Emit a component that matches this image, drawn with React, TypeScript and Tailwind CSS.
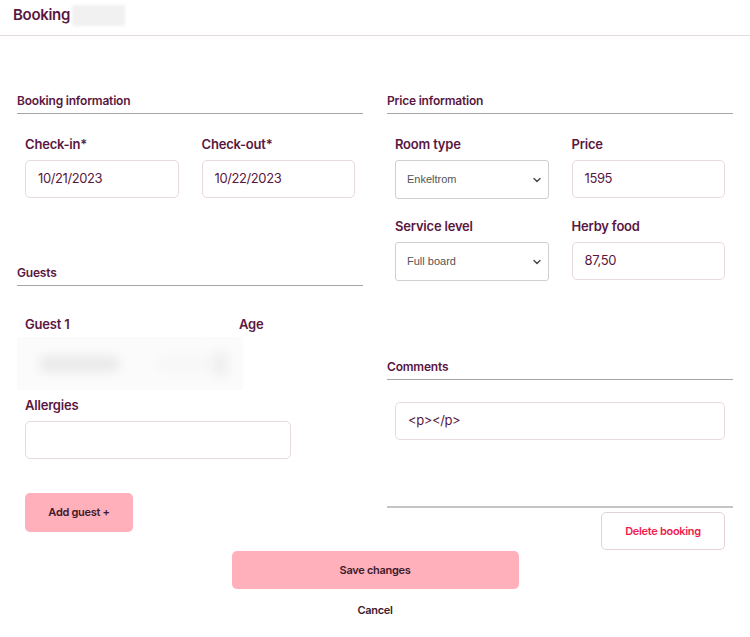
import React from "react";

function Label({ children }: { children: React.ReactNode }) {
  return (
    <div className="text-[13px] leading-[20px] font-semibold tracking-[-0.2px] text-[#5a1742] mb-[6px]">
      {children}
    </div>
  );
}

function Input({ value, className = "" }: { value?: string; className?: string }) {
  return (
    <div
      className={`h-[38px] rounded-[5px] border border-[#e8d9df] bg-white flex items-center px-[12px] text-[13px] tracking-[-0.4px] text-[#5a1742] ${className}`}
    >
      {value}
    </div>
  );
}

function Select({ value }: { value: string }) {
  return (
    <div
      className="h-[39px] rounded-[3px] border border-[#cfcfcf] bg-white flex items-center justify-between pl-[11px] pr-[6px] text-[11px] text-[#555]"
      style={{ fontFamily: '"Liberation Sans", Arial, sans-serif' }}
    >
      <span>{value}</span>
      <svg width="10" height="10" viewBox="0 0 10 10" fill="none">
        <path d="M2 3.5 L5 6.5 L8 3.5" stroke="#444" strokeWidth="1.4" strokeLinecap="round" strokeLinejoin="round" />
      </svg>
    </div>
  );
}

function Heading({ children }: { children: React.ReactNode }) {
  return (
    <div className="text-[12px] leading-[18px] font-semibold tracking-[-0.2px] text-[#5a1742] pb-[3px] border-b border-[#a5a5a5]">
      {children}
    </div>
  );
}

export default function App() {
  return (
    <div className="w-[750px] h-[637px] bg-white" style={{ fontFamily: 'Inter, "Noto Sans", sans-serif' }}>
      <div className="h-[36px] border-b border-[#e4dbe0] flex items-start pt-[5px] pl-[13px]">
        <span className="text-[15px] leading-[20px] font-semibold tracking-[-0.3px] text-[#5a1742]">Booking</span>
        <span className="ml-[2px] w-[53px] h-[21px] bg-[#f1f1f1] blur-[1.5px]" />
      </div>

      <div className="grid grid-cols-2 gap-x-[24px] px-[17px] pt-[56px]">
        {/* Left column */}
        <div className="flex flex-col">
          <Heading>Booking information</Heading>
          <div className="grid grid-cols-2 gap-x-[23px] px-[8px] pt-[20px]">
            <div>
              <Label>Check-in*</Label>
              <Input value="10/21/2023" />
            </div>
            <div>
              <Label>Check-out*</Label>
              <Input value="10/22/2023" />
            </div>
          </div>

          <div className="mt-[66px]">
            <Heading>Guests</Heading>
          </div>
          <div className="flex px-[8px] pt-[28px]">
            <div className="w-[214px] text-[13px] leading-[20px] font-semibold tracking-[-0.2px] text-[#5a1742]">Guest 1</div>
            <div className="text-[13px] leading-[20px] font-semibold tracking-[-0.2px] text-[#5a1742]">Age</div>
          </div>
          <div className="mt-[3px] w-[226px] h-[53px] bg-[#fbfbfb] flex items-center pl-[22px] pr-[14px]">
            <div className="w-[92px] h-[18px] rounded-full bg-[#ebebeb] blur-[5px]" />
            <div className="ml-[38px] w-[60px] h-[16px] rounded-full bg-[#f7f7f7] blur-[5px]" />
            <div className="ml-auto w-[20px] h-[26px] rounded-full bg-[#f0f0f0] blur-[5px]" />
          </div>
          <div className="px-[8px] mt-[5px]">
            <Label>Allergies</Label>
            <Input className="w-[266px]" />
          </div>
          <div className="px-[8px] mt-[34px]">
            <button className="w-[108px] h-[39px] rounded-[5px] bg-[#ffb0bb] text-[11px] font-semibold tracking-[-0.3px] text-[#3d1a2c]">
              Add guest +
            </button>
          </div>
        </div>

        {/* Right column */}
        <div className="flex flex-col">
          <Heading>Price information</Heading>
          <div className="grid grid-cols-2 gap-x-[23px] gap-y-[17px] px-[8px] pt-[20px]">
            <div>
              <Label>Room type</Label>
              <Select value="Enkeltrom" />
            </div>
            <div>
              <Label>Price</Label>
              <Input value="1595" />
            </div>
            <div>
              <Label>Service level</Label>
              <Select value="Full board" />
            </div>
            <div>
              <Label>Herby food</Label>
              <Input value="87,50" />
            </div>
          </div>

          <div className="mt-[77px]">
            <Heading>Comments</Heading>
          </div>
          <div className="px-[8px] mt-[22px]">
            <Input value="<p></p>" />
          </div>
          <div className="mt-[66px] h-[2px] bg-[#c4c4c4]" />
          <div className="flex justify-end px-[8px] mt-[4px]">
            <button className="w-[124px] h-[38px] rounded-[5px] border border-[#e4d2da] bg-white text-[11px] font-semibold tracking-[-0.3px] text-[#f01b4c]">
              Delete booking
            </button>
          </div>
        </div>
      </div>

      <div className="flex flex-col items-center">
        <button className="mt-[1px] w-[287px] h-[38px] rounded-[5px] bg-[#ffb0bb] text-[11px] font-semibold tracking-[-0.3px] text-[#3d1a2c]">
          Save changes
        </button>
        <div className="mt-[13px] text-[11px] leading-[16px] font-semibold tracking-[-0.3px] text-[#3d1a2c]">Cancel</div>
      </div>
    </div>
  );
}
